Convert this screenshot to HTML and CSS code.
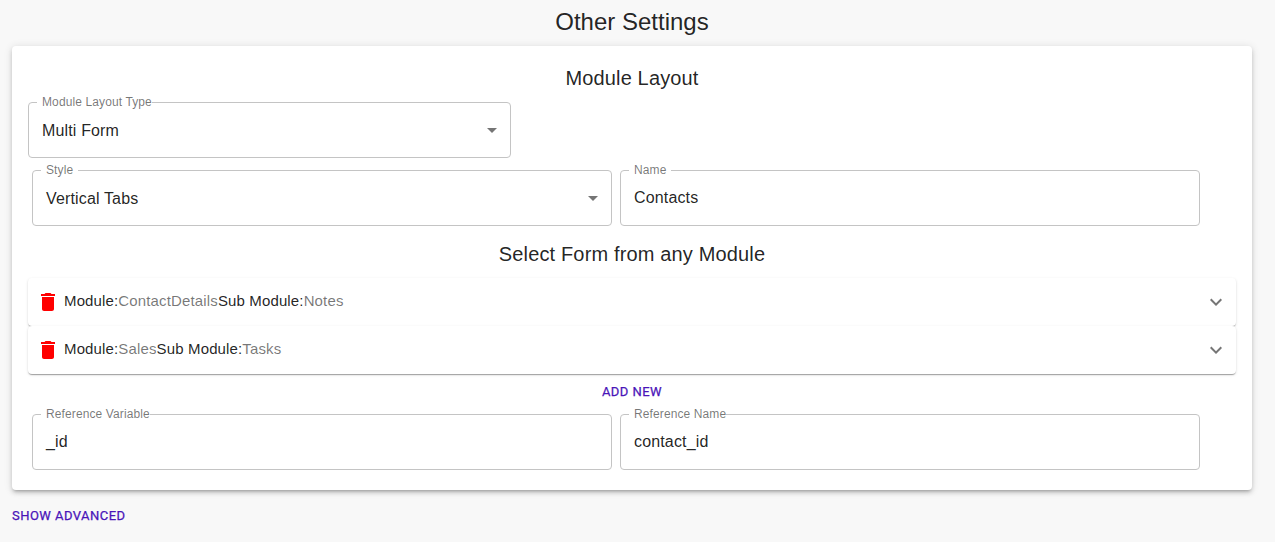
FILE: index.html
```html
<!DOCTYPE html>
<html lang="en">
<head>
<meta charset="utf-8">
<title>Other Settings</title>
<link rel="stylesheet" href="styles.css">
</head>
<body>
<main class="page">
  <h1 class="page-title">Other Settings</h1>
  <section class="card">
    <h2 class="section-title">Module Layout</h2>
    <fieldset class="field field-type">
      <legend class="tight">Module Layout Type</legend>
      <div class="value select"><span>Multi Form</span>
        <svg class="icon" viewBox="0 0 24 24"><path d="M7 10l5 5 5-5z"/></svg></div>
    </fieldset>
    <div class="row">
      <fieldset class="field">
        <legend>Style</legend>
        <div class="value select"><span>Vertical Tabs</span>
          <svg class="icon" viewBox="0 0 24 24"><path d="M7 10l5 5 5-5z"/></svg></div>
      </fieldset>
      <fieldset class="field">
        <legend>Name</legend>
        <div class="value">Contacts</div>
      </fieldset>
    </div>
    <h2 class="section-title">Select Form from any Module</h2>
    <div class="accordions">
      <div class="accordion">
        <svg class="icon trash" viewBox="0 0 24 24"><path d="M6 19c0 1.1.9 2 2 2h8c1.1 0 2-.9 2-2V7H6v12zM19 4h-3.500l-1-1h-5l-1 1H5v2h14V4z"/></svg>
        <p class="summary">Module:<span>ContactDetails</span>Sub Module:<span>Notes</span></p>
        <svg class="icon" viewBox="0 0 24 24"><path d="M16.590 8.590L12 13.170 7.410 8.590 6 10l6 6 6-6z"/></svg>
      </div>
      <div class="accordion">
        <svg class="icon trash" viewBox="0 0 24 24"><path d="M6 19c0 1.100.9 2 2 2h8c1.100 0 2-.9 2-2V7H6v12zM19 4h-3.500l-1-1h-5l-1 1H5v2h14V4z"/></svg>
        <p class="summary">Module:<span>Sales</span>Sub Module:<span>Tasks</span></p>
        <svg class="icon" viewBox="0 0 24 24"><path d="M16.590 8.590L12 13.170 7.410 8.590 6 10l6 6 6-6z"/></svg>
      </div>
    </div>
    <button class="btn btn-add" type="button">Add new</button>
    <div class="row row-last">
      <fieldset class="field">
        <legend class="tight">Reference Variable</legend>
        <div class="value">_id</div>
      </fieldset>
      <fieldset class="field">
        <legend class="tight">Reference Name</legend>
        <div class="value">contact_id</div>
      </fieldset>
    </div>
  </section>
  <button class="btn btn-advanced" type="button">Show advanced</button>
</main>
</body>
</html>
```
FILE: styles.css
```css
* { box-sizing: border-box; }
body {
  margin: 0;
  background: #f8f8f8;
  color: rgba(0, 0, 0, .87);
  font-family: "Liberation Sans", Arial, sans-serif;
}
.page { width: 1240px; margin-left: 12px; padding-top: 6px; }
.page-title {
  margin: 0 0 8px;
  font-size: 24px;
  font-weight: 400;
  line-height: 32px;
  text-align: center;
}
.card {
  display: flex;
  flex-direction: column;
  height: 444px;
  padding: 16px;
  border-radius: 4px;
  background: #fff;
  box-shadow: 0 3px 3px -2px rgba(0, 0, 0, .2), 0 3px 4px 0 rgba(0, 0, 0, .14), 0 1px 8px 0 rgba(0, 0, 0, .12);
}
.section-title {
  margin: 0;
  font-size: 20px;
  font-weight: 400;
  line-height: 32px;
  letter-spacing: .15px;
  text-align: center;
}
.field {
  flex: 0 0 auto;
  width: 580px;
  height: 61px;
  min-width: 0;
  margin: 0;
  padding: 0 13px 0 8px;
  border: 1px solid #c4c4c4;
  border-radius: 4px;
}
.field-type { width: 483px; margin-top: 3px; }
.field legend {
  height: 11px;
  padding: 0 5px;
  color: rgba(0, 0, 0, .54);
  font-size: 12px;
  line-height: 11px;
  letter-spacing: .11px;
  white-space: nowrap;
}
.field legend.tight { padding-right: 0; }
.value {
  display: flex;
  align-items: center;
  height: 42px;
  padding-left: 5px;
  font-size: 16px;
  line-height: 19px;
  letter-spacing: .15px;
}
.select { justify-content: space-between; height: 45px; margin-right: -7px; }
.select .icon { margin-bottom: 2px; }
.row { display: flex; gap: 8px; margin: 7px 0 12px 4px; }
.row-last { margin-top: -1px; margin-bottom: 0; }
.icon { flex: none; width: 24px; height: 24px; fill: rgba(0, 0, 0, .54); }
.accordions { margin-top: 8px; }
.accordion {
  display: flex;
  align-items: center;
  height: 48px;
  padding: 0 8px;
  border-radius: 4px;
  background: #fff;
  box-shadow: 0 2px 1px -1px rgba(0, 0, 0, .2), 0 1px 1px 0 rgba(0, 0, 0, .14), 0 1px 3px 0 rgba(0, 0, 0, .12);
}
.trash { fill: #f00; }
.summary {
  flex: 1;
  margin: 0 0 2px 4px;
  font-size: 15px;
  line-height: 22px;
  letter-spacing: .14px;
}
.summary span { color: rgba(0, 0, 0, .54); }
.btn {
  border: 0;
  padding: 0;
  background: none;
  color: #4a14b8;
  font: 400 13px/22px Roboto, sans-serif;
  letter-spacing: .46px;
  -webkit-text-stroke: .25px #4a14b8;
  text-transform: uppercase;
}
.btn-add { align-self: center; margin: 7px 0; }
.btn-advanced { display: block; margin-top: 15px; }
```
